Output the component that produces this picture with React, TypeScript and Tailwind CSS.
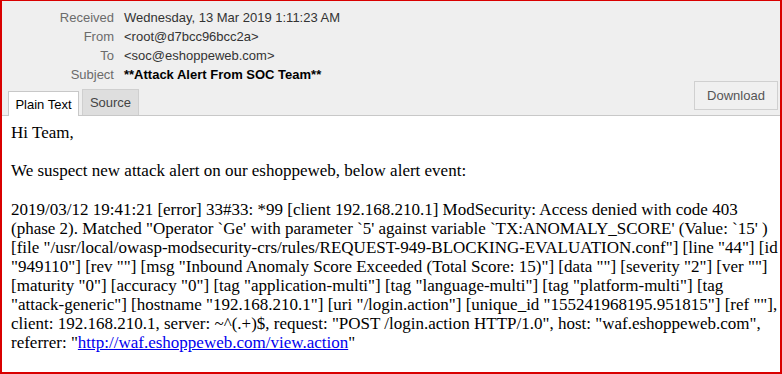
const headerRows = [
  { label: 'Received', value: 'Wednesday, 13 Mar 2019 1:11:23 AM' },
  { label: 'From', value: '<root@d7bcc96bcc2a>' },
  { label: 'To', value: '<soc@eshoppeweb.com>' },
  { label: 'Subject', value: '**Attack Alert From SOC Team**', bold: true },
];

const logLines = [
  '2019/03/12 19:41:21 [error] 33#33: *99 [client 192.168.210.1] ModSecurity: Access denied with code 403',
  "(phase 2). Matched \"Operator `Ge' with parameter `5' against variable `TX:ANOMALY_SCORE' (Value: `15' )",
  '[file "/usr/local/owasp-modsecurity-crs/rules/REQUEST-949-BLOCKING-EVALUATION.conf"] [line "44"] [id',
  '"949110"] [rev ""] [msg "Inbound Anomaly Score Exceeded (Total Score: 15)"] [data ""] [severity "2"] [ver ""]',
  '[maturity "0"] [accuracy "0"] [tag "application-multi"] [tag "language-multi"] [tag "platform-multi"] [tag',
  '"attack-generic"] [hostname "192.168.210.1"] [uri "/login.action"] [unique_id "155241968195.951815"] [ref ""],',
  'client: 192.168.210.1, server: ~^(.+)$, request: "POST /login.action HTTP/1.0", host: "waf.eshoppeweb.com",',
];

export default function App() {
  return (
    <div className="w-[782px] h-[374px] bg-white">
      <div className="flex h-[374px] w-[782px] flex-col border-t border-l-2 border-r-2 border-b-2 border-[#d90000] bg-white">
        {/* Header */}
        <div className="flex items-end justify-between border-b border-[#c8c8c8] bg-[#efefef] pl-[6px] pr-[2px] font-['Liberation_Sans',Arial,sans-serif] text-[13px]">
          <div className="flex flex-col">
            <div className="grid grid-cols-[106px_1fr] gap-x-[10px] pt-[7px] leading-[19px]">
              {headerRows.map(row => (
                <div key={row.label} className="contents">
                  <span className="text-right text-[#6b6b6b]">{row.label}</span>
                  <span className={row.bold ? 'font-bold text-black' : 'text-[#333]'}>{row.value}</span>
                </div>
              ))}
            </div>
            <div className="mt-[5px] flex items-end gap-[3px]">
              <div className="-mb-px flex h-[25px] w-[71px] items-center justify-center border border-b-0 border-[#c8c8c8] bg-white pt-[2px] text-black">
                Plain Text
              </div>
              <div className="flex h-[26px] w-[57px] items-center justify-center border border-b-0 border-[#cfcfcf] bg-[#dedede] text-[#444]">
                Source
              </div>
            </div>
          </div>
          <button className="mb-[5px] h-[29px] w-[84px] border border-[#d0d0d0] bg-[#f0f0f0] text-[13px] text-[#555]">
            Download
          </button>
        </div>

        {/* Body */}
        <div className="flex-1 bg-white pl-[9px] pt-[7px] font-['Liberation_Serif','Times_New_Roman',serif] text-[17px] leading-[19px] text-black">
          <p className="mb-[19px]">Hi Team,</p>
          <p className="mb-[20px]">We suspect new attack alert on our eshoppeweb, below alert event:</p>
          <p className="whitespace-nowrap">
            {logLines.map(line => (
              <span key={line}>
                {line}
                <br />
              </span>
            ))}
            referrer: "<a href="#" className="text-[#0000ee] underline">http://waf.eshoppeweb.com/view.action</a>"
          </p>
        </div>
      </div>
    </div>
  );
}
